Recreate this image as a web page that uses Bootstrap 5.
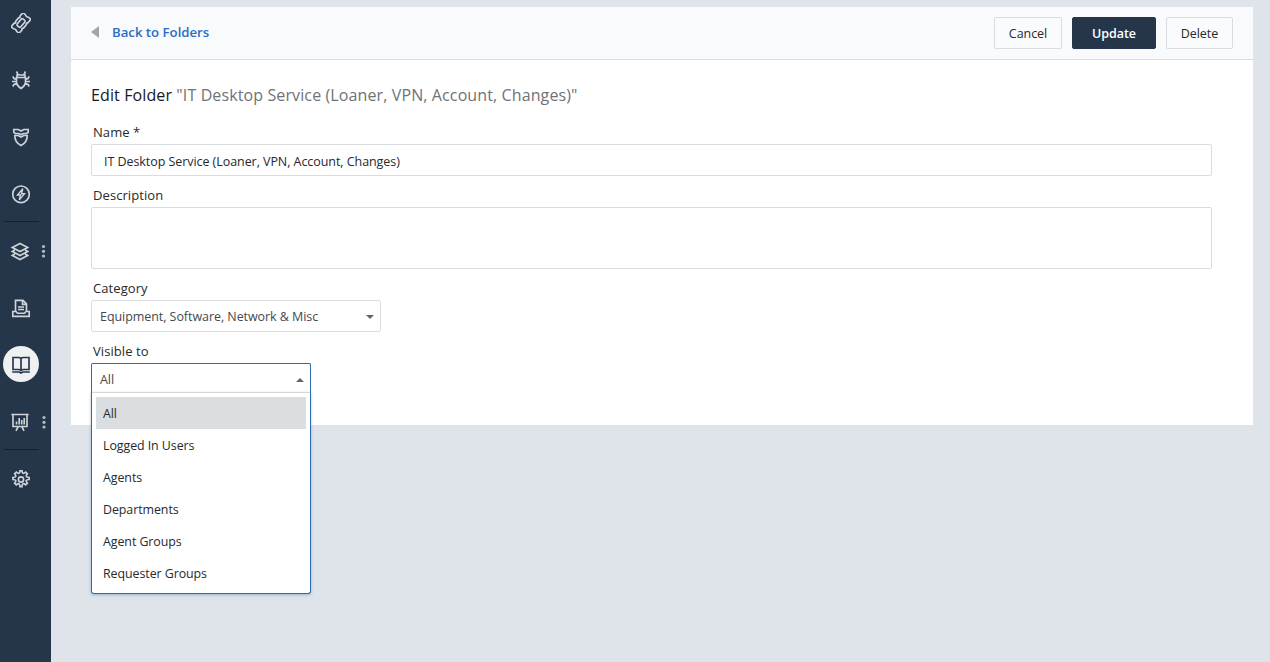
<!DOCTYPE html>
<html lang="en">
<head>
<meta charset="utf-8">
<meta name="viewport" content="width=device-width, initial-scale=1">
<title>Edit Folder</title>
<link href="https://cdn.jsdelivr.net/npm/bootstrap@5.3.0/dist/css/bootstrap.min.css" rel="stylesheet">
<style>
  body { font-family: "Open Sans", "Noto Sans", sans-serif; font-size: 13px; line-height: 20px; color: #27292d; background: #dfe3ea; letter-spacing: -.06px; }
  .sidebar { width: 51px; background: #25364b; padding: 5px 0 0 3px; }
  .side-item { width: 36px; height: 36px; margin-bottom: 21px; color: #ced4d8; }
  .side-item svg { width: 20px; height: 20px; fill: none; stroke: currentColor; stroke-width: 1.65; }
  .side-item.active { background: #eef0f2; color: #25364b; border-radius: 50%; position: relative; top: -1px; }
  .side-line { width: 35px; height: 1px; background: #142131; margin: -12px 0 11px 1px; }
  .kebab { left: 38px; top: 11px; width: 5px; }
  .side-item .kebab svg { width: 5px; height: 14px; fill: #b4bbc2; stroke: none; display: block; }
  .panel { margin: 7px 17px 0 20px; height: 418px; background: #fff; }
  .panel-top { height: 53px; background: #f8fafc; border-bottom: 1px solid #d8dde3; padding: 0 20px; }
  .back-link { color: #2c6cc4; font-weight: 600; font-size: 13.2px; letter-spacing: 0; padding-bottom: 2px; }
  .back-link svg { width: 9px; height: 12px; margin-right: 12px; }
  .act { height: 32px; border-radius: 2px; font-size: 12.5px; line-height: 21px; padding: 5px 0; letter-spacing: inherit; }
  .act-light, .act-light:hover { border: 1px solid #d9dde0; background: #fafbfc; color: #27292d; }
  .act-dark, .act-dark:hover { background: #25364b; color: #fff; font-weight: 600; border: 1px solid #25364b; }
  .w-cancel { width: 68px; }
  .w-update { width: 84px; margin: 0 10px; }
  .w-delete { width: 67px; }
  .form-area { padding: 23px 41px 0 20px; }
  .title { font-size: 16px; line-height: 24px; margin: 0 0 15px; font-weight: 400; color: #16181b; white-space: nowrap; letter-spacing: .115px; }
  .title span { color: #6f7278; }
  .lbl { margin: 0 0 2px 2px; height: 20px; line-height: 20px; display: block; font-size: 13px; letter-spacing: .08px; }
  .box, .box:focus { border: 1px solid #dadddf; border-radius: 2px; font-size: 12.5px; color: #27292d; background: #fff; box-shadow: none; letter-spacing: inherit; }
  .name-box { height: 32px; padding: 2px 11px 0 12px; margin-bottom: 9px; }
  .desc-box { height: 62px; min-height: 62px; margin-bottom: 9px; resize: none; }
  .pick { height: 32px; padding: 1px 6px 0 8px; color: #45494f; }
  .pick-cat { width: 290px; margin-bottom: 9px; }
  .pick-vis { width: 220px; height: 30px; padding-top: 2px; border: 1px solid #2c6bac; border-bottom: 0; border-radius: 2px 2px 0 0; font-size: 12.5px; }
  .tri { width: 8px; height: 4px; fill: #62666c; }
  .opts { top: 29px; left: 0; width: 220px; height: 202px; background: #fff; border: 1px solid #2c6bac; border-top: 0; border-radius: 0 0 3px 3px; box-shadow: 0 1px 3px rgba(44,107,172,.4); }
  .opts ul { border-top: 1px solid #d5d8db; padding: 4px; height: 100%; }
  .opts li { height: 32px; line-height: 33px; padding-left: 7px; font-size: 12.4px; }
  .opts li.sel { background: #dadee1; }
</style>
</head>
<body>
<div class="d-flex vh-100 overflow-hidden">
  <nav class="sidebar flex-shrink-0">
    <div class="side-item d-flex align-items-center justify-content-center">
      <svg viewBox="0 0 20 20"><g transform="rotate(-50 10 10)"><path d="M.8 4.800h4.700q1 1.700 2.200 0h4.600q1.200 1.700 2.200 0h4.700v3.200q-1.500 2 0 4v3.200h-4.700q-1-1.700-2.200 0H7.700q-1.200-1.700-2.200 0H.8v-3.200q1.500-2 0-4z"/><rect x="5.500" y="7.700" width="9" height="4.600" rx="1.500"/></g></svg>
    </div>
    <div class="side-item d-flex align-items-center justify-content-center">
      <svg viewBox="0 0 20 20"><path d="M5.500 7.500h9v5.200q-.5 3.300-4.500 5.800q-4-2.500-4.500-5.800zM6 7.500V5h8v2.500M7.200 4.800L5.500 1.500M12.800 4.800l1.700-3.300M5.500 9.500L3 8.500 1.800 6.300M5.500 11.500H1M5.700 13.500L3 14.500l-1.200 2M14.500 9.500L17 8.500l1.200-2.200M14.500 11.500H19M14.300 13.500l2.700 1 1.200 2"/></svg>
    </div>
    <div class="side-item d-flex align-items-center justify-content-center">
      <svg viewBox="0 0 20 20"><path d="M2.800 2.500h4.400L10 4l2.800-1.500h4.400v2.800l-1.500 1.200h-3.200L10 7.500 7.500 6.500H4.300L2.800 5.300zM3.800 8.500h3.400L10 10l2.800-1.500h3.400q.2 6.800-6.200 10Q3.600 15.300 3.800 8.500z"/></svg>
    </div>
    <div class="side-item d-flex align-items-center justify-content-center">
      <svg viewBox="0 0 20 20"><circle cx="10" cy="10.300" r="8.300"/><path stroke-width="1.400" d="M11.800 4.800L6.500 11h3l-1.200 4.900 5.200-6.200h-3z"/></svg>
    </div>
    <div class="side-line"></div>
    <div class="side-item d-flex align-items-center justify-content-center position-relative">
      <svg viewBox="0 0 20 20" class="me-1"><path d="M11 2.500l7.700 4L11 10.500 3.300 6.500zM5.900 9L3.300 10.500l7.700 4 7.700-4L16.100 9M5.900 13L3.300 14.500l7.700 4 7.700-4-2.600-1.500"/></svg>
      <span class="kebab position-absolute"><svg viewBox="0 0 5 14"><circle cx="2.500" cy="2.500" r="1.600"/><circle cx="2.500" cy="7.300" r="1.600"/><circle cx="2.500" cy="12" r="1.600"/></svg></span>
    </div>
    <div class="side-item d-flex align-items-center justify-content-center">
      <svg viewBox="0 0 20 20"><path d="M4.500 13V2.300h7.500l3.500 3.500V13M11.500 2.500v3.800h3.800M7 9h6M7 11.500h6M1.800 13.500h3.200l1.500 1.700h7l1.500-1.700h3.200v4.900H1.800z"/></svg>
    </div>
    <div class="side-item active d-flex align-items-center justify-content-center">
      <svg viewBox="0 0 20 20"><path d="M10 4.500Q9 3.500 7.500 3.500H2v12h5.500Q9 15.500 10 16.500Q11 15.500 12.500 15.500H18v-12h-5.500Q11 3.500 10 4.500zM10 4.500v12M1.200 18h7l1.800 1 1.800-1h7"/></svg>
    </div>
    <div class="side-item d-flex align-items-center justify-content-center position-relative">
      <svg viewBox="0 0 20 20" class="me-1"><path d="M2.300 2.500h17.400M4 2.500v12h14v-12M9.200 14.500L7 18.800M12.800 14.500l2.200 4.300M7.500 12.500V9.500M10.200 12.500V6M12.700 12.500V8M15.200 12.500V6"/></svg>
      <span class="kebab position-absolute ms-px"><svg viewBox="0 0 5 14"><circle cx="3" cy="2.500" r="1.600"/><circle cx="3" cy="7.300" r="1.600"/><circle cx="3" cy="12" r="1.600"/></svg></span>
    </div>
    <div class="side-line"></div>
    <div class="side-item d-flex align-items-center justify-content-center">
      <svg viewBox="0 0 20 20"><circle cx="10" cy="10.500" r="2.600"/><path d="M8 4.300Q8.900 3.900 9 1.900h2q.1 2 1 2.400t2.700-1.200l1.700 1.700q-1.600 1.800-1.200 2.700t2.900 1v2q-2.500.1-2.900 1t1.200 2.700l-1.700 1.700q-1.800-1.600-2.700-1.200t-1 2.900H9q-.1-2.500-1-2.900t-2.700 1.200l-1.700-1.700q1.600-1.800 1.200-2.700t-2.900-1v-2q2.500-.1 2.900-1T3.600 4.800l1.700-1.700Q7.100 4.700 8 4.300z"/></svg>
    </div>
  </nav>

  <main class="flex-grow-1">
    <section class="panel">
      <header class="panel-top d-flex align-items-center">
        <a href="#" class="back-link d-flex align-items-center text-decoration-none me-auto"><svg viewBox="0 0 9 12"><path d="M0 6l8-6v12z" fill="#a3a6a9"/></svg>Back to Folders</a>
        <button class="btn act act-light w-cancel">Cancel</button>
        <button class="btn act act-dark w-update">Update</button>
        <button class="btn act act-light w-delete">Delete</button>
      </header>
      <form class="form-area">
        <h1 class="title">Edit Folder <span>"IT Desktop Service (Loaner, VPN, Account, Changes)"</span></h1>
        <label class="lbl" for="nm">Name *</label>
        <input id="nm" class="form-control box name-box" value="IT Desktop Service (Loaner, VPN, Account, Changes)">
        <label class="lbl" for="ds">Description</label>
        <textarea id="ds" class="form-control box desc-box"></textarea>
        <span class="lbl">Category</span>
        <div class="box pick pick-cat d-flex align-items-center justify-content-between"><span>Equipment, Software, Network &amp; Misc</span><svg class="tri" viewBox="0 0 8 4"><path d="M0 0h8L4 4z"/></svg></div>
        <span class="lbl">Visible to</span>
        <div class="position-relative">
          <div class="pick pick-vis d-flex align-items-center justify-content-between"><span>All</span><svg class="tri" viewBox="0 0 8 4"><path d="M0 4h8L4 0z"/></svg></div>
          <div class="opts position-absolute">
            <ul class="list-unstyled mb-0">
              <li class="sel">All</li>
              <li>Logged In Users</li>
              <li>Agents</li>
              <li>Departments</li>
              <li>Agent Groups</li>
              <li>Requester Groups</li>
            </ul>
          </div>
        </div>
      </form>
    </section>
  </main>
</div>
<script src="https://cdn.jsdelivr.net/npm/bootstrap@5.3.0/dist/js/bootstrap.bundle.min.js"></script>
</body>
</html>
